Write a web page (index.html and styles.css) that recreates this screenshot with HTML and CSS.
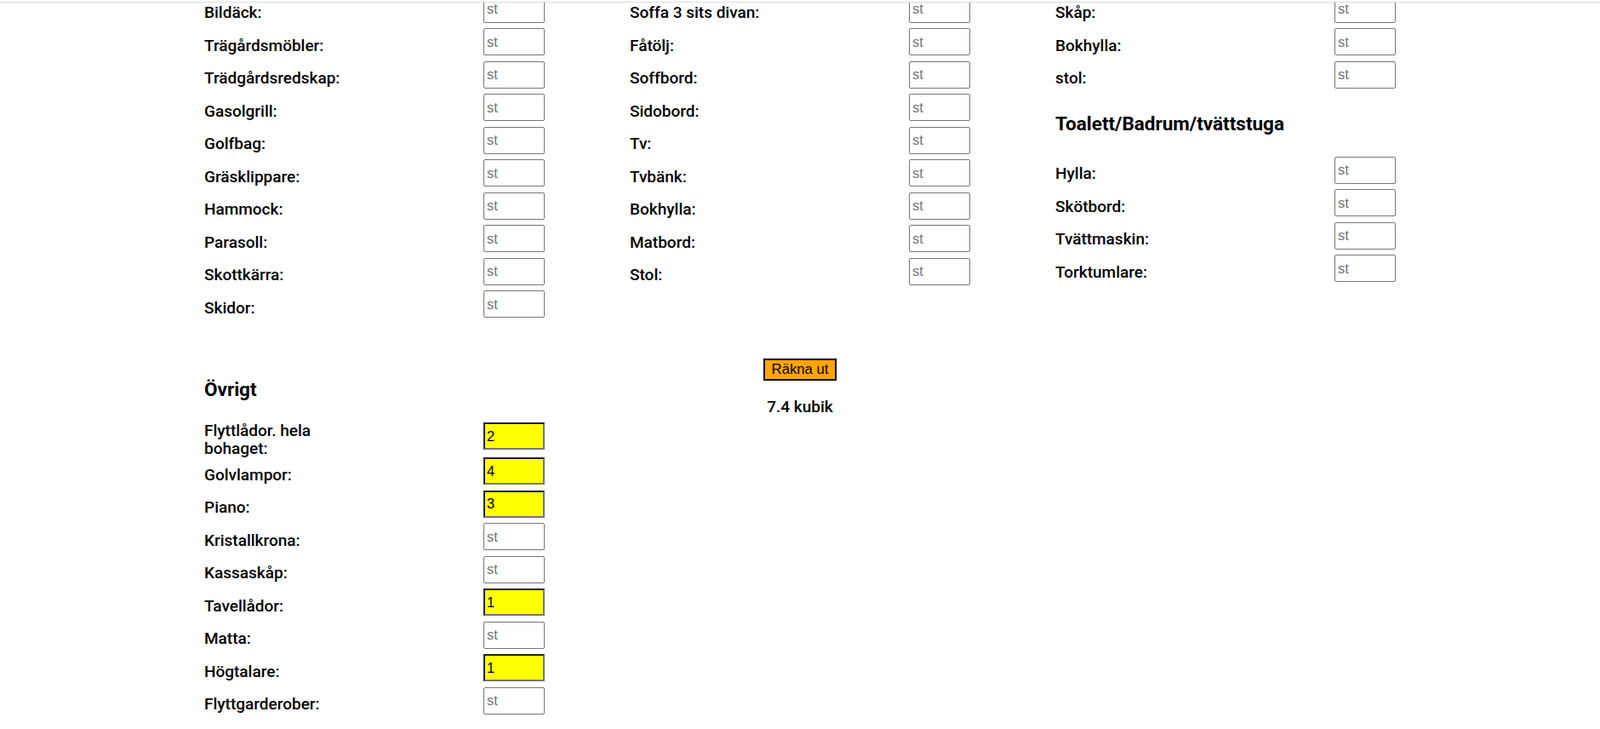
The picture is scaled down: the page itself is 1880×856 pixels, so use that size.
FILE: index.html
```html
<!DOCTYPE html>
<html lang="sv">
<head>
<meta charset="utf-8">
<title>Flyttkalkylator</title>
<link rel="stylesheet" href="styles.css">
</head>
<body>
<div class="topbar"></div>
<main class="page">
  <form class="calc">
    <div class="col">
      <div class="row"><label>Bildäck:</label><input type="text" placeholder="st"></div>
      <div class="row"><label>Trägårdsmöbler:</label><input type="text" placeholder="st"></div>
      <div class="row"><label>Trädgårdsredskap:</label><input type="text" placeholder="st"></div>
      <div class="row"><label>Gasolgrill:</label><input type="text" placeholder="st"></div>
      <div class="row"><label>Golfbag:</label><input type="text" placeholder="st"></div>
      <div class="row"><label>Gräsklippare:</label><input type="text" placeholder="st"></div>
      <div class="row"><label>Hammock:</label><input type="text" placeholder="st"></div>
      <div class="row"><label>Parasoll:</label><input type="text" placeholder="st"></div>
      <div class="row"><label>Skottkärra:</label><input type="text" placeholder="st"></div>
      <div class="row"><label>Skidor:</label><input type="text" placeholder="st"></div>
    </div>
    <div class="col">
      <div class="row"><label>Soffa 3 sits divan:</label><input type="text" placeholder="st"></div>
      <div class="row"><label>Fåtölj:</label><input type="text" placeholder="st"></div>
      <div class="row"><label>Soffbord:</label><input type="text" placeholder="st"></div>
      <div class="row"><label>Sidobord:</label><input type="text" placeholder="st"></div>
      <div class="row"><label>Tv:</label><input type="text" placeholder="st"></div>
      <div class="row"><label>Tvbänk:</label><input type="text" placeholder="st"></div>
      <div class="row"><label>Bokhylla:</label><input type="text" placeholder="st"></div>
      <div class="row"><label>Matbord:</label><input type="text" placeholder="st"></div>
      <div class="row"><label>Stol:</label><input type="text" placeholder="st"></div>
    </div>
    <div class="col">
      <div class="row"><label>Skåp:</label><input type="text" placeholder="st"></div>
      <div class="row"><label>Bokhylla:</label><input type="text" placeholder="st"></div>
      <div class="row"><label>stol:</label><input type="text" placeholder="st"></div>
      <h3 class="section-title">Toalett/Badrum/tvättstuga</h3>
      <div class="row"><label>Hylla:</label><input type="text" placeholder="st"></div>
      <div class="row"><label>Skötbord:</label><input type="text" placeholder="st"></div>
      <div class="row"><label>Tvättmaskin:</label><input type="text" placeholder="st"></div>
      <div class="row"><label>Torktumlare:</label><input type="text" placeholder="st"></div>
    </div>

    <div class="col">
      <h3 class="section-title">Övrigt</h3>
      <div class="row"><label class="multi">Flyttlådor. hela bohaget:</label><input class="filled" type="text" placeholder="st" value="2"></div>
      <div class="row"><label>Golvlampor:</label><input class="filled" type="text" placeholder="st" value="4"></div>
      <div class="row"><label>Piano:</label><input class="filled" type="text" placeholder="st" value="3"></div>
      <div class="row"><label>Kristallkrona:</label><input type="text" placeholder="st"></div>
      <div class="row"><label>Kassaskåp:</label><input type="text" placeholder="st"></div>
      <div class="row"><label>Tavellådor:</label><input class="filled" type="text" placeholder="st" value="1"></div>
      <div class="row"><label>Matta:</label><input type="text" placeholder="st"></div>
      <div class="row"><label>Högtalare:</label><input class="filled" type="text" placeholder="st" value="1"></div>
      <div class="row"><label>Flyttgarderober:</label><input type="text" placeholder="st"></div>
    </div>
    <div class="col result-col">
      <button type="button" class="calc-btn">Räkna ut</button>
      <p class="result">7.4 kubik</p>
    </div>
    <div class="col"></div>
  </form>
</main>
</body>
</html>
```
FILE: styles.css
```css
html, body {
  margin: 0;
  padding: 0;
  background: #fff;
  overflow: hidden;
}

body {
  font-family: Roboto, "Liberation Sans", Arial, sans-serif;
  color: #000;
}

.topbar {
  position: fixed;
  top: 0;
  left: 0;
  right: 0;
  height: 2px;
  background: #fff;
  border-bottom: 1px solid #dcdcdc;
  z-index: 5;
}

.page {
  margin-top: -5.2px;
}

.calc {
  display: grid;
  grid-template-columns: repeat(3, 500px);
  justify-content: center;
  row-gap: 43px;
  align-items: start;
}

.col {
  padding-left: 50px;
}

.row {
  display: grid;
  grid-template-columns: 328px 72px;
  align-items: center;
  min-height: 38.5px;
}

.row label {
  max-width: 180px;
  margin: 1.5px 0 -1.5px;
  font-size: 19px;
  font-weight: 500;
  line-height: 20.5px;
}

.row label.multi {
  margin: 0;
}

.row input {
  align-self: start;
  box-sizing: border-box;
  width: 72px;
  height: 32px;
  margin: 0;
  padding: 1px 3px;
  border: 1px solid #767676;
  border-radius: 2px;
  background: #fff;
  font-family: "Liberation Sans", Arial, sans-serif;
  font-size: 16.5px;
  color: #000;
}

.row input::placeholder {
  color: #757575;
}

.row input.filled {
  background: #ffff00;
  border: 2px inset #767676;
  border-radius: 0;
  padding: 1px 2px;
}

.section-title {
  margin: 22.4px 0 25px;
  font-size: 22.5px;
  font-weight: 700;
  line-height: 25.8px;
}

.result-col {
  padding-left: 0;
  display: flex;
  flex-direction: column;
  align-items: center;
}

.calc-btn {
  margin: -2px 0 0;
  padding: 1px 7.5px;
  border: 2px solid #000;
  border-radius: 0;
  background: #ffa500;
  color: #000;
  font-family: "Liberation Sans", Arial, sans-serif;
  font-size: 16.7px;
  line-height: 20px;
}

.result {
  margin: 20.5px 0 0;
  font-size: 19px;
  font-weight: 500;
  line-height: 22.5px;
}
```
